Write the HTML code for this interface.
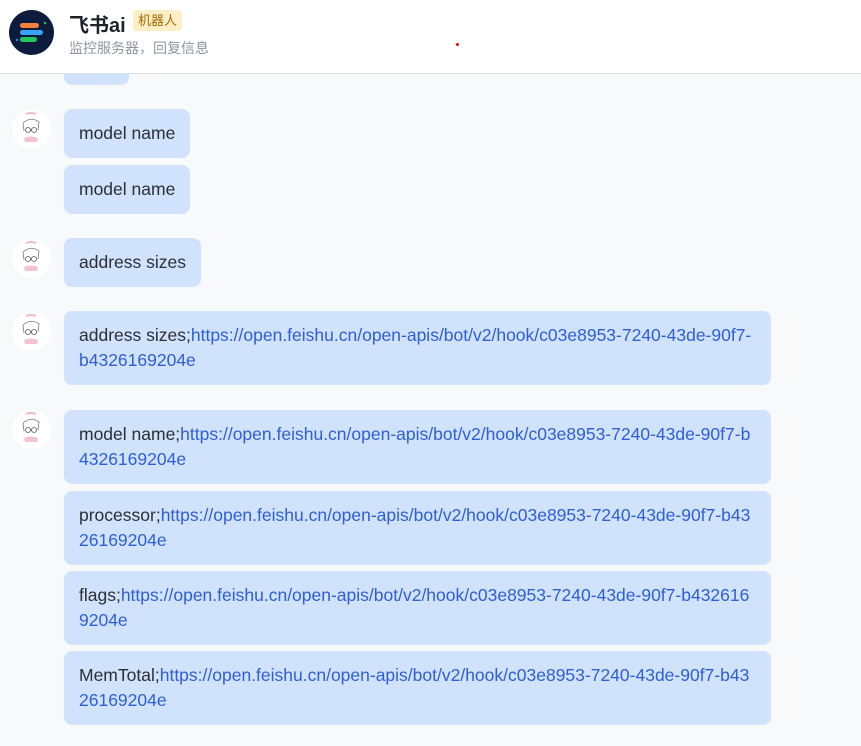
<!DOCTYPE html>
<html><head><meta charset="utf-8"><style>
*{margin:0;padding:0;box-sizing:border-box}
body{width:861px;height:746px;overflow:hidden;background:#f8f9fb;font-family:"Liberation Sans","Noto Sans CJK SC",sans-serif;position:relative}
.hdr{position:absolute;left:0;top:0;width:861px;height:74px;background:#fff;border-bottom:1px solid #dee0e3;z-index:2}
.logo{position:absolute;left:9px;top:10px;width:45px;height:45px;border-radius:50%;background:#0d1b3d}
.title{position:absolute;left:69px;top:9px;font-size:20px;font-weight:bold;color:#1f2329}
.tag{position:absolute;left:133px;top:10px;height:21px;padding:0 5px;background:#fcefc7;color:#a16c00;font-size:13px;line-height:21px;border-radius:4px}
.sub{position:absolute;left:69px;top:38px;font-size:14px;color:#8f959e}
.b{position:absolute;left:64px;background:#d1e2fd;border-radius:8px;padding:12px 15px;font-size:17.5px;line-height:25px;color:#2b2f36;white-space:nowrap}
.b a{color:#2e5fd6;text-decoration:none}
.av{position:absolute;left:12px;width:39px;height:39px;border-radius:50%;background:#fff}
</style></head><body>
<div class="hdr">
<div class="logo"><svg width="45" height="45"><rect x="11" y="13" width="19" height="5" rx="2.5" fill="#f5803e"/><rect x="11" y="20" width="23" height="5" rx="2.5" fill="#3ba3f5"/><rect x="11" y="27" width="17" height="5" rx="2.5" fill="#22c55e"/><circle cx="36" cy="13" r="1.2" fill="#22c55e"/><circle cx="8" cy="30" r="1.2" fill="#3b82f6"/></svg></div>
<div class="title">飞书ai</div><div class="tag">机器人</div>
<div class="sub">监控服务器，回复信息</div>
<div style="position:absolute;left:456px;top:43px;width:3px;height:3px;border-radius:50%;background:#e00"></div>
</div>
<div class="b" style="top:60px;width:65px;height:25px;padding:0"></div>
<svg width="0" height="0" style="position:absolute"><defs><g id="f"><circle cx="19.5" cy="19.5" r="19.5" fill="#fff"/><path d="M11 13 Q19 6 27 12 L26 20 M11 13 L12 21" stroke="#777" fill="none" stroke-width="0.8"/><circle cx="16" cy="20" r="2.5" stroke="#555" fill="none" stroke-width="0.8"/><circle cx="22" cy="20" r="2.5" stroke="#555" fill="none" stroke-width="0.8"/><path d="M12 28 Q19 25 26 28 L25 32 L13 32Z" fill="#f4c3d3"/><path d="M14 4 Q19 2 24 4" stroke="#f4b8c6" stroke-width="2" fill="none"/></g></defs></svg>
<div class="av" style="top:110px"><svg width="39" height="39"><use href="#f"/></svg></div>
<div class="b" style="top:109px">model name</div>
<div class="b" style="top:165px">model name</div>
<div class="av" style="top:239px"><svg width="39" height="39"><use href="#f"/></svg></div>
<div class="b" style="top:238px">address sizes</div>
<div class="av" style="top:312px"><svg width="39" height="39"><use href="#f"/></svg></div>
<div class="b" style="top:311px;width:707px">address sizes;<a>https://open.feishu.cn/open-apis/bot/v2/hook/c03e8953-7240-43de-90f7-</a><br><a>b4326169204e</a></div>
<div class="av" style="top:410px"><svg width="39" height="39"><use href="#f"/></svg></div>
<div class="b" style="top:410px;width:707px">model name;<a>https://open.feishu.cn/open-apis/bot/v2/hook/c03e8953-7240-43de-90f7-b</a><br><a>4326169204e</a></div>
<div class="b" style="top:491px;width:707px">processor;<a>https://open.feishu.cn/open-apis/bot/v2/hook/c03e8953-7240-43de-90f7-b43</a><br><a>26169204e</a></div>
<div class="b" style="top:571px;width:707px">flags;<a>https://open.feishu.cn/open-apis/bot/v2/hook/c03e8953-7240-43de-90f7-b432616</a><br><a>9204e</a></div>
<div class="b" style="top:651px;width:707px">MemTotal;<a>https://open.feishu.cn/open-apis/bot/v2/hook/c03e8953-7240-43de-90f7-b43</a><br><a>26169204e</a></div>
</body></html>
